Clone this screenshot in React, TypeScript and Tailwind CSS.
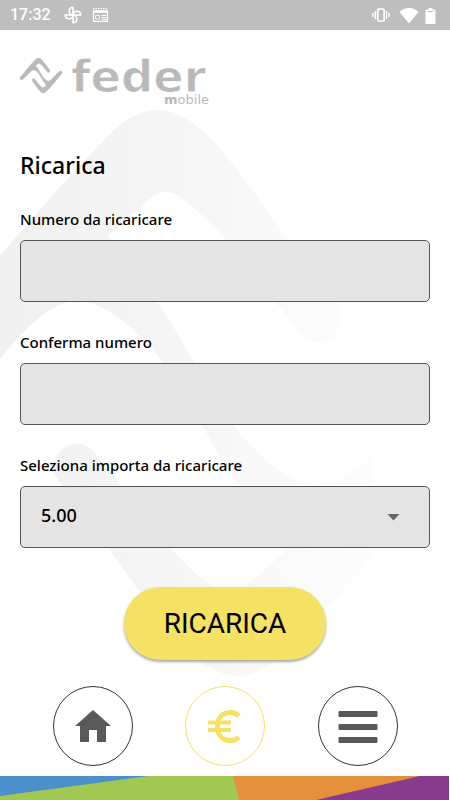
import { useState } from "react";

const BODY_FONT = "font-['Noto_Sans','Open_Sans',sans-serif]";

const RIBBON =
  "M108 236L150 199Q165 186 180 197Q205 215 230 244L299 332Q313 349 331 338Q347 325 339 309L285 236Q240 171 215 143Q185 110 157 110Q132 110 105 139Q60 185 0 256L-138 425Q-150 445 -135 460Q-120 472 -104 457L0 359Q45 302 75 301Q110 301 153 350Q178 380 202 425Q235 487 287 550Z";

function Watermark() {
  return (
    <svg
      aria-hidden="true"
      viewBox="0 0 450 800"
      preserveAspectRatio="xMidYMin slice"
      className="absolute inset-0 -z-10 h-full w-full"
    >
      <defs>
        <linearGradient id="fade" x1="0" x2="371" y1="0" y2="0" gradientUnits="userSpaceOnUse">
          <stop offset="0" stopColor="#f0f0f0" />
          <stop offset="0.5" stopColor="#f6f6f6" />
          <stop offset="1" stopColor="#fdfdfd" />
        </linearGradient>
        <clipPath id="ribbon">
          <path d={RIBBON} />
          <path d={RIBBON} transform="rotate(180 197.5 393)" />
        </clipPath>
      </defs>
      <rect width="371" height="800" fill="url(#fade)" clipPath="url(#ribbon)" />
    </svg>
  );
}

function StatusBar() {
  return (
    <header className="flex h-[30px] items-center justify-between bg-[#bebebe] pr-2 pl-[10px] text-white">
      <div className="flex items-center">
        <time className="w-[54px] font-['Roboto',sans-serif] text-base leading-5 font-medium">17:32</time>
        <svg width="18" height="18" viewBox="0 0 18 18" fill="none" stroke="currentColor" strokeWidth="1.6" strokeLinejoin="round" aria-hidden="true">
          <path d="M9 9V1.2A3.9 3.9 0 0 0 5.2 5C5.2 7.2 6.8 9 9 9H16.8A3.9 3.9 0 0 0 13 5.2C10.8 5.2 9 6.8 9 9V16.8A3.9 3.9 0 0 0 12.8 13C12.8 10.8 11.2 9 9 9H1.2A3.9 3.9 0 0 0 5 12.8C7.2 12.8 9 11.2 9 9Z" />
        </svg>
        <svg className="ml-[10px]" width="17" height="16" viewBox="0 0 17 16" fill="none" stroke="currentColor" aria-hidden="true">
          <path d="M1.500 4V14.300H15.500V4" strokeWidth="1.300" />
          <path d="M1 4.500H16" strokeWidth="2.600" />
          <path d="M1 1.700H16" strokeWidth="1.200" strokeDasharray="1.400 1.100" />
          <path d="M3.500 8.500H7.500V12H3.500Z" strokeWidth=".8" />
          <path d="M9.500 8.500H14.500M9.500 10.500H14.500M9.500 12.300H14.500" strokeWidth="1" />
        </svg>
      </div>
      <div className="flex items-center">
        <svg width="18" height="16" viewBox="0 0 18 16" fill="none" stroke="currentColor" aria-hidden="true">
          <rect x="5.8" y="2" width="6.4" height="12" rx="1" strokeWidth="1.7" />
          <path d="M3.4 4V12M14.6 4V12M1 6V10M17 6V10" strokeWidth="1.4" />
        </svg>
        <svg className="ml-[9px]" width="20" height="17" viewBox="0 0 20 17" fill="currentColor" aria-hidden="true">
          <path d="M10 16.500L.5 5Q4.500 1 10 1T19.500 5Z" />
        </svg>
        <svg className="mr-[6px] ml-[6px]" width="11" height="17" viewBox="0 0 11 17" aria-hidden="true">
          <path d="M3.500 1H7.500V2.500H9.500Q10.500 2.500 10.500 3.500V16Q10.500 17 9.500 17H1.500Q.500 17 .500 16V3.500Q.500 2.500 1.500 2.500H3.500Z" fill="currentColor" />
          <path d="M2.500 4.500H8.500" stroke="#bebebe" />
        </svg>
      </div>
    </header>
  );
}

function Logo() {
  return (
    <svg className="overflow-visible" width="190" height="52" viewBox="0 0 190 52" fill="#b9b9b9" role="img" aria-label="feder mobile">
      <g transform="translate(21 18.500) scale(.0615) translate(-197.500 -393)">
        <path d={RIBBON} stroke="#b9b9b9" strokeWidth="10" />
        <path d={RIBBON} stroke="#b9b9b9" strokeWidth="10" transform="rotate(180 197.5 393)" />
      </g>
      <text x="51" y="35" fontFamily="'DejaVu Sans', sans-serif" fontWeight="700" fontSize="45" stroke="#ffffff" strokeWidth="1">
        feder
      </text>
      <text x="189" y="47" textAnchor="end" fontFamily="'DejaVu Sans', sans-serif" fontSize="13">
        <tspan fontWeight="700">m</tspan>obile
      </text>
    </svg>
  );
}

const fieldBox =
  "h-[62px] w-full rounded-[5px] border border-[#555555] bg-[#e4e4e4] px-5 pb-1 text-lg leading-6 font-medium text-black outline-none focus:border-black";
const labelText = "text-[15px] leading-6 font-medium";

function NumberField({ id, label }: { id: string; label: string }) {
  const [value, setValue] = useState("");
  return (
    <div className="flex flex-col gap-[9px]">
      <label htmlFor={id} className={labelText}>{label}</label>
      <input id={id} type="tel" value={value} onChange={(e) => setValue(e.target.value)} className={fieldBox} />
    </div>
  );
}

function AmountField() {
  return (
    <div className="flex flex-col gap-[9px]">
      <label htmlFor="amount" className={labelText}>Seleziona importa da ricaricare</label>
      <div className="relative">
        <select id="amount" defaultValue="5.00" className={`appearance-none ${fieldBox}`}>
          <option>5.00</option>
          <option>10.00</option>
          <option>20.00</option>
        </select>
        <svg className="pointer-events-none absolute top-7 right-[30px]" width="13" height="7" viewBox="0 0 13 7" aria-hidden="true">
          <path d="M.5 0H12.500L6.500 6.500Z" fill="#666666" />
        </svg>
      </div>
    </div>
  );
}

const roundButton = "flex size-20 items-center justify-center rounded-full border bg-white";

function BottomNav() {
  return (
    <nav className="flex justify-evenly">
      <button type="button" aria-label="Home" className={`${roundButton} border-[#333333]`}>
        <svg width="36" height="32" viewBox="0 0 36 32" fill="#58595b" aria-hidden="true">
          <path d="M18 0L36 16H31V32H22V20H14V32H5V16H0Z" />
        </svg>
      </button>
      <button type="button" aria-label="Ricarica" className={`${roundButton} border-[#f6e163]`}>
        <svg width="36" height="36" viewBox="0 0 36 36" fill="none" stroke="#f6e163" aria-hidden="true">
          <path d="M32 8C29 5 26.500 4.500 23.500 4.500C15 4.500 10.500 10.500 10.500 18.500S15 32.500 23.500 32.500C26.500 32.500 29 32 32 29" strokeWidth="5" />
          <path d="M1 14.500H24M1 22H24" strokeWidth="4" />
        </svg>
      </button>
      <button type="button" aria-label="Menu" className={`${roundButton} border-[#333333]`}>
        <svg width="40" height="34" viewBox="0 0 40 34" fill="#58595b" aria-hidden="true">
          <rect x=".5" y="2" width="39" height="6" rx="1" />
          <rect x=".5" y="15" width="39" height="6" rx="1" />
          <rect x=".5" y="28" width="39" height="6" rx="1" />
        </svg>
      </button>
    </nav>
  );
}

function ColorStripe() {
  return (
    <svg className="mt-[10px] block h-6 w-full" viewBox="0 0 450 24" preserveAspectRatio="none" aria-hidden="true">
      <rect width="449" height="24" fill="#a2c854" />
      <path d="M0 0H148L0 20Z" fill="#4b8fcb" />
      <path d="M233 0H449V24H239Z" fill="#e5903c" />
      <path d="M420 0H449V24H316Z" fill="#893b8e" />
    </svg>
  );
}

export default function App() {
  return (
    <div className={`relative isolate flex min-h-screen flex-col overflow-hidden bg-white text-black ${BODY_FONT}`}>
      <Watermark />
      <StatusBar />
      <main className="flex flex-col px-5 pt-[27px]">
        <Logo />
        <h1 className="mt-10 text-[23px] leading-8 font-medium">Ricarica</h1>
        <form className="mt-[26px] flex flex-col" onSubmit={(e) => e.preventDefault()}>
          <div className="flex flex-col gap-7">
            <NumberField id="number" label="Numero da ricaricare" />
            <NumberField id="confirm" label="Conferma numero" />
            <AmountField />
          </div>
          <button
            type="submit"
            className="mt-[39px] h-[73px] self-center rounded-full bg-[#f5e163] px-10 font-['Roboto',sans-serif] text-[28px] leading-8 shadow-[0_2px_3px_rgba(0,0,0,0.35)]"
          >
            RICARICA
          </button>
        </form>
      </main>
      <footer className="mt-auto">
        <BottomNav />
        <ColorStripe />
      </footer>
    </div>
  );
}
